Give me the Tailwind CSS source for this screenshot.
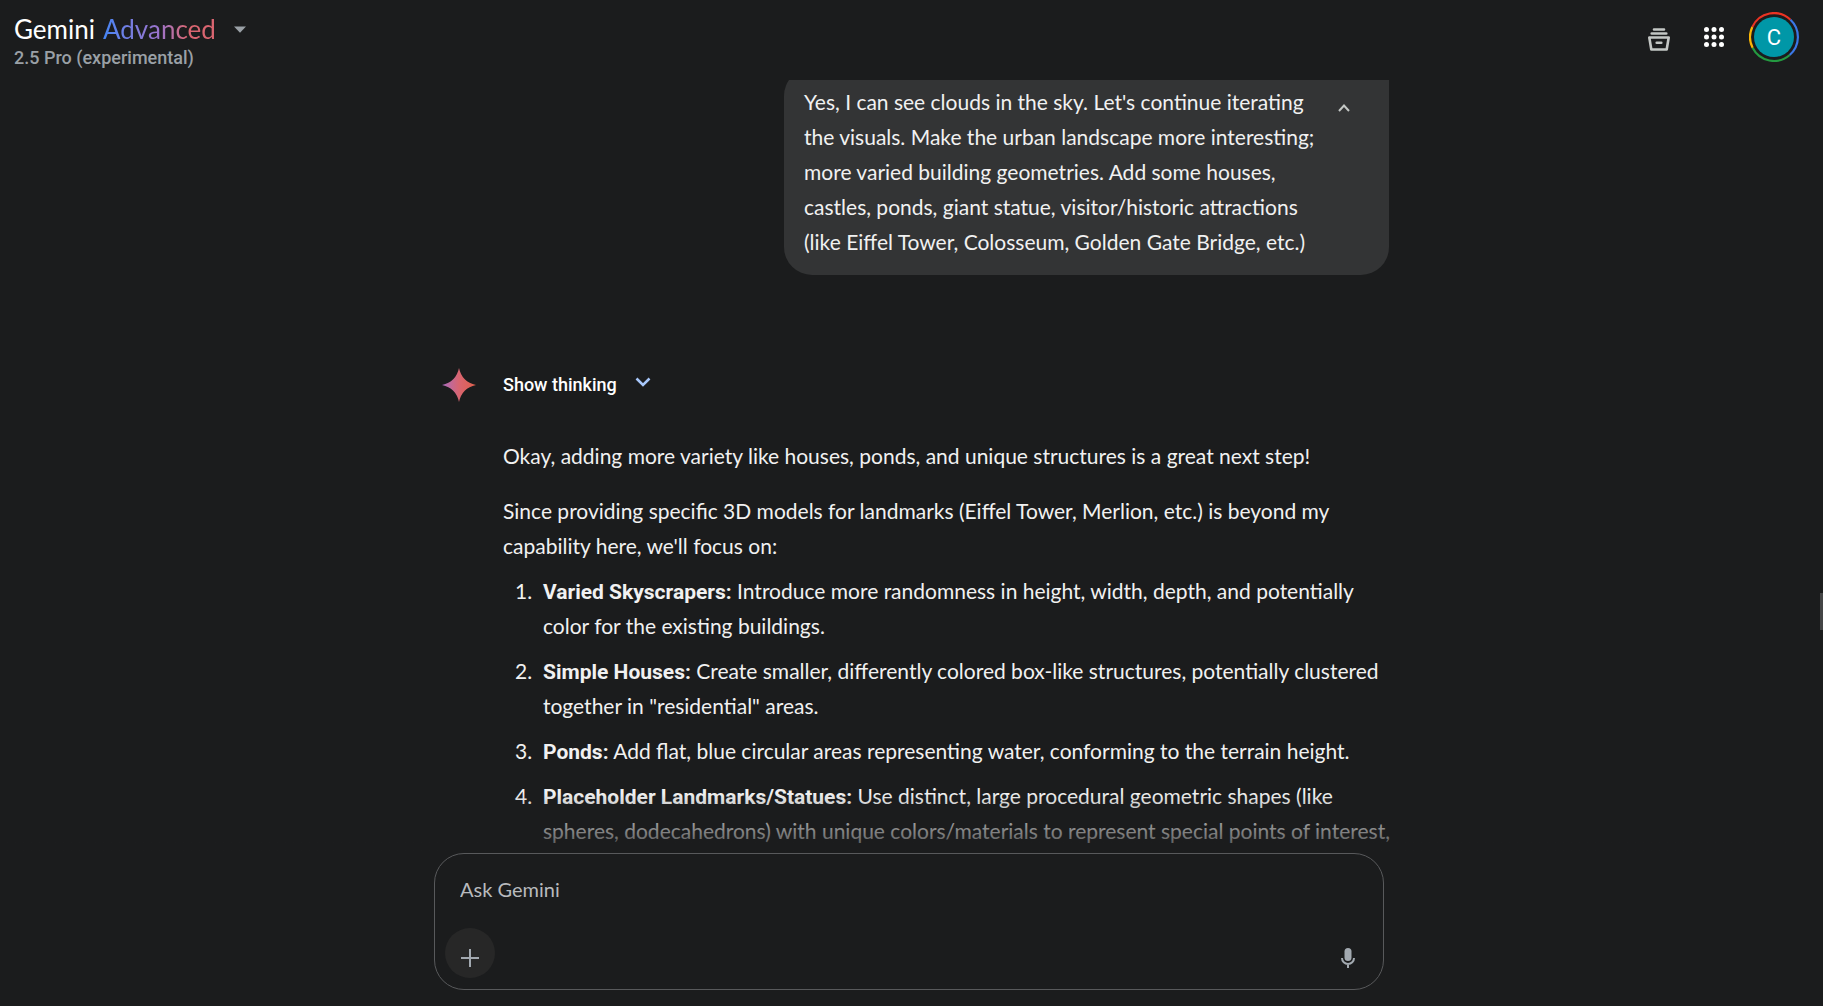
<!DOCTYPE html>
<html lang="en">
<head>
<meta charset="utf-8">
<meta name="viewport" content="width=device-width, initial-scale=1">
<title>Gemini Advanced</title>
<script src="https://cdn.jsdelivr.net/npm/@tailwindcss/browser@4"></script>
</head>
<body class="flex h-screen flex-col overflow-hidden bg-[#1b1c1d] font-[Lato,sans-serif] text-[21px] leading-[35px] text-[#f1f1f1]">
  <header class="flex h-20 shrink-0 items-start justify-between pl-[14px] pr-[24px]">
    <button class="flex flex-col items-start pt-3 text-left">
      <span class="flex items-center text-[26px] leading-[34px] text-white">
        <span>Gemini</span>
        <span class="ml-2 bg-linear-to-r from-[#4285f4] via-[#9b72cb] to-[#d96570] to-75% bg-clip-text text-transparent">Advanced</span>
        <svg class="ml-[18px] h-[7px] w-3" viewBox="0 0 12 7" fill="#9aa0a6" aria-hidden="true"><path d="M0 .5h12L6 6.8z"/></svg>
      </span>
      <span class="font-[Roboto,sans-serif] text-[18px] leading-6 font-medium text-[#9aa0a6]">2.5 Pro (experimental)</span>
    </button>
    <div class="flex items-center pt-3">
      <button aria-label="Activity" class="mr-[33px] pt-1">
        <svg class="h-6 w-6" viewBox="0 0 24 24" fill="none" stroke="#c4c7c5" stroke-width="2.6" stroke-linecap="round" stroke-linejoin="round" aria-hidden="true"><path d="M7 2.500h10M4.700 6.500h14.600M2.300 10.500h19.400l-2 12H4.300zM9.700 15.800h4.600"/></svg>
      </button>
      <button aria-label="Google apps" class="mr-[25px]">
        <svg class="h-5 w-5" viewBox="0 0 20 20" fill="#fff" aria-hidden="true"><circle cx="2.500" cy="2.500" r="2.500"/><circle cx="10" cy="2.500" r="2.500"/><circle cx="17.500" cy="2.500" r="2.500"/><circle cx="2.500" cy="10" r="2.500"/><circle cx="10" cy="10" r="2.500"/><circle cx="17.500" cy="10" r="2.500"/><circle cx="2.500" cy="17.500" r="2.500"/><circle cx="10" cy="17.500" r="2.500"/><circle cx="17.500" cy="17.500" r="2.500"/></svg>
      </button>
      <button aria-label="Account" class="relative grid h-[50px] w-[50px] place-items-center">
        <svg class="absolute inset-0" viewBox="0 0 50 50" fill="none" stroke-width="2.200" aria-hidden="true"><path stroke="#ea3323" d="M3.300 15A23.900 23.900 0 0 1 41.500 7.700"/><path stroke="#3b78e7" d="M41.500 7.700A23.900 23.900 0 0 1 40.700 43"/><path stroke="#249a41" d="M40.700 43A23.900 23.900 0 0 1 3.600 35.800"/><path stroke="#fbb605" d="M3.600 35.800A23.900 23.900 0 0 1 3.300 15"/></svg>
        <span class="grid h-10 w-10 place-items-center rounded-full bg-[#0097a7] font-[Roboto,sans-serif] text-[22px] text-white">C</span>
      </button>
    </div>
  </header>

  <main class="relative min-h-0 flex-1 overflow-hidden">
    <div class="mx-auto max-w-[955px]">
      <div class="-mt-3 ml-auto flex w-[605px] items-start justify-between rounded-[28px] rounded-tr-sm bg-[#333435] py-4 pr-[38px] pl-5">
        <p class="whitespace-nowrap">Yes, I can see clouds in the sky. Let's continue iterating<br>the visuals. Make the urban landscape more interesting;<br>more varied building geometries. Add some houses,<br>castles, ponds, giant statue, visitor/historic attractions<br>(like Eiffel Tower, Colosseum, Golden Gate Bridge, etc.)</p>
        <button aria-label="Collapse text" class="mt-[18px]">
          <svg class="h-3 w-[14px]" viewBox="0 0 14 12" fill="none" stroke="#c4c7c5" stroke-width="2" aria-hidden="true"><path d="M2 9l5-5.500L12 9"/></svg>
        </button>
      </div>

      <div class="flex items-center pt-[92px] pl-2">
        <svg class="h-[34px] w-[34px]" viewBox="0 0 34 34" aria-hidden="true"><defs><linearGradient id="spark"><stop offset="0" stop-color="#a86cc0"/><stop offset=".5" stop-color="#d96570"/><stop offset="1" stop-color="#e0604c"/></linearGradient></defs><path fill="url(#spark)" d="M17 0Q20 14 34 17Q20 20 17 34Q14 20 0 17Q14 14 17 0z"/></svg>
        <button class="ml-[27px] flex items-center font-[Roboto,sans-serif] text-[18px] font-medium text-white">Show thinking
          <svg class="mb-[6px] ml-[18px] h-[10px] w-4" viewBox="0 0 16 10" fill="none" stroke="#a8c7fa" stroke-width="2.500" aria-hidden="true"><path d="M1.500 1.500L8 8l6.500-6.500"/></svg>
        </button>
      </div>

      <div class="pt-9 pl-[69px] whitespace-nowrap">
        <p>Okay, adding more variety like houses, ponds, and unique structures is a great next step!</p>
        <p class="mt-5">Since providing specific 3D models for landmarks (Eiffel Tower, Merlion, etc.) is beyond my<br>capability here, we'll focus on:</p>
        <ol class="mt-[10px] space-y-[10px] pl-10 [counter-reset:step] [&>li]:relative [&>li]:[counter-increment:step] [&>li]:before:absolute [&>li]:before:-left-7 [&>li]:before:content-[counter(step)_'.'] [&_b]:font-[Roboto,sans-serif] [&_b]:leading-none [&_b]:font-bold">
          <li><b>Varied Skyscrapers:</b> Introduce more randomness in height, width, depth, and potentially<br>color for the existing buildings.</li>
          <li><b>Simple Houses:</b> Create smaller, differently colored box-like structures, potentially clustered<br>together in "residential" areas.</li>
          <li><b>Ponds:</b> Add flat, blue circular areas representing water, conforming to the terrain height.</li>
          <li><b>Placeholder Landmarks/Statues:</b> Use distinct, large procedural geometric shapes (like<br>spheres, dodecahedrons) with unique colors/materials to represent special points of interest,</li>
        </ol>
      </div>
    </div>
    <div class="pointer-events-none absolute inset-x-0 bottom-0 h-[60px] bg-linear-to-t from-[#1b1c1d]/80 to-transparent"></div>
    <div class="absolute top-[513px] right-0 h-[37px] w-[3px] bg-[#444546]"></div>
  </main>

  <footer class="shrink-0 pb-4">
    <div class="mx-auto w-full max-w-[955px] pr-[5px]">
      <form class="flex h-[137px] flex-col justify-between rounded-[30px] border border-[#58595b] pt-[18px] pr-7 pb-[11px] pl-[10px]">
        <input type="text" aria-label="Ask Gemini" placeholder="Ask Gemini" class="ml-[15px] w-4/5 bg-transparent text-[20px] outline-none placeholder:text-[#b8babd]">
        <div class="flex items-center justify-between">
          <button type="button" aria-label="Add files" class="grid h-[50px] w-[50px] place-items-center rounded-full bg-[#272727] pt-[10px]">
            <svg class="h-[18px] w-[18px]" viewBox="0 0 18 18" stroke="#a2a9b0" stroke-width="2" aria-hidden="true"><path d="M9 0v18M0 9h18"/></svg>
          </button>
          <button type="button" aria-label="Use microphone" class="pt-[10px]">
            <svg class="h-5 w-[14px]" viewBox="0 0 14 20" fill="none" stroke="#a2a9b0" stroke-width="2" aria-hidden="true"><rect x="3.500" y="0" width="7" height="13" rx="3.500" fill="#a2a9b0" stroke="none"/><path d="M1 10a6 6 0 0 0 12 0M7 16v4"/></svg>
          </button>
        </div>
      </form>
    </div>
  </footer>
</body>
</html>
